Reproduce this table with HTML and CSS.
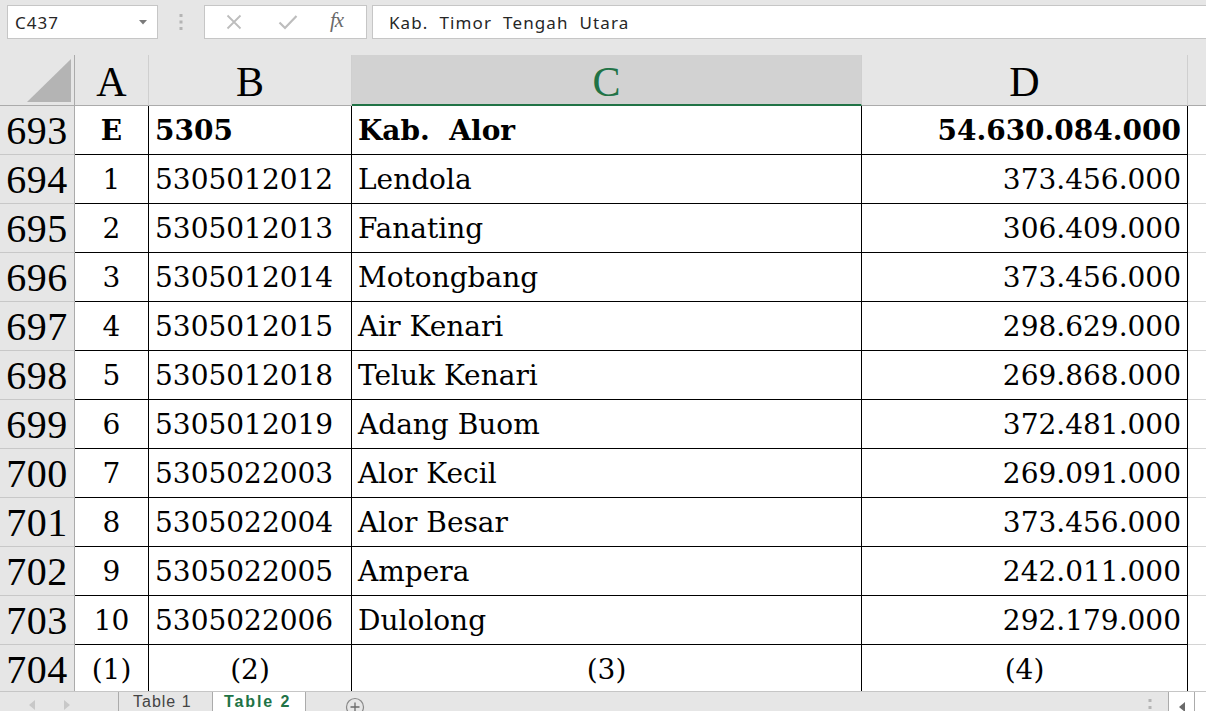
FILE: index.html
```html
<!DOCTYPE html>
<html lang="id">
<head>
<meta charset="utf-8">
<title>Table 2</title>
<link rel="stylesheet" href="styles.css">
</head>
<body>
<div class="app">
  <div class="fbar">
    <div class="namebox">
      <span>C437</span>
      <svg class="dd" width="8" height="5" viewBox="0 0 8 5"><path d="M0 0 L8 0 L4 4.5 Z" fill="#7a7a7a"/></svg>
    </div>
    <div class="grip">
      <svg width="4" height="18" viewBox="0 0 4 18"><rect x="0.5" y="1" width="3" height="3" fill="#b4b4b4"/><rect x="0.5" y="7.5" width="3" height="3" fill="#b4b4b4"/><rect x="0.5" y="14" width="3" height="3" fill="#b4b4b4"/></svg>
    </div>
    <div class="fxbox">
      <svg class="ic-x" width="16" height="16" viewBox="0 0 16 16"><path d="M1.5 1.5 L14.5 14.5 M14.5 1.5 L1.5 14.5" stroke="#bdbdbd" stroke-width="1.8" fill="none"/></svg>
      <svg class="ic-ok" width="20" height="16" viewBox="0 0 20 16"><path d="M1.5 8.5 L7 14 L18.5 2" stroke="#bdbdbd" stroke-width="2.2" fill="none"/></svg>
      <span class="fx">fx</span>
    </div>
    <div class="finput">Kab.  Timor  Tengah  Utara</div>
  </div>

  <div class="sheet">
    <div class="corner"></div>
    <div class="hd">A</div>
    <div class="hd">B</div>
    <div class="hd sel">C</div>
    <div class="hd">D</div>
    <div class="hd hd-e"></div>

    <div class="rh">693</div>
    <div class="c ca b">E</div>
    <div class="c b">5305</div>
    <div class="c b">Kab.  Alor</div>
    <div class="c cr b">54.630.084.000</div>
    <div class="e"></div>

    <div class="rh">694</div>
    <div class="c ca">1</div>
    <div class="c">5305012012</div>
    <div class="c">Lendola</div>
    <div class="c cr">373.456.000</div>
    <div class="e"></div>

    <div class="rh">695</div>
    <div class="c ca">2</div>
    <div class="c">5305012013</div>
    <div class="c">Fanating</div>
    <div class="c cr">306.409.000</div>
    <div class="e"></div>

    <div class="rh">696</div>
    <div class="c ca">3</div>
    <div class="c">5305012014</div>
    <div class="c">Motongbang</div>
    <div class="c cr">373.456.000</div>
    <div class="e"></div>

    <div class="rh">697</div>
    <div class="c ca">4</div>
    <div class="c">5305012015</div>
    <div class="c">Air Kenari</div>
    <div class="c cr">298.629.000</div>
    <div class="e"></div>

    <div class="rh">698</div>
    <div class="c ca">5</div>
    <div class="c">5305012018</div>
    <div class="c">Teluk Kenari</div>
    <div class="c cr">269.868.000</div>
    <div class="e"></div>

    <div class="rh">699</div>
    <div class="c ca">6</div>
    <div class="c">5305012019</div>
    <div class="c">Adang Buom</div>
    <div class="c cr">372.481.000</div>
    <div class="e"></div>

    <div class="rh">700</div>
    <div class="c ca">7</div>
    <div class="c">5305022003</div>
    <div class="c">Alor Kecil</div>
    <div class="c cr">269.091.000</div>
    <div class="e"></div>

    <div class="rh">701</div>
    <div class="c ca">8</div>
    <div class="c">5305022004</div>
    <div class="c">Alor Besar</div>
    <div class="c cr">373.456.000</div>
    <div class="e"></div>

    <div class="rh">702</div>
    <div class="c ca">9</div>
    <div class="c">5305022005</div>
    <div class="c">Ampera</div>
    <div class="c cr">242.011.000</div>
    <div class="e"></div>

    <div class="rh">703</div>
    <div class="c ca">10</div>
    <div class="c">5305022006</div>
    <div class="c">Dulolong</div>
    <div class="c cr">292.179.000</div>
    <div class="e"></div>

    <div class="rh">704</div>
    <div class="c ca">(1)</div>
    <div class="c ca">(2)</div>
    <div class="c ca">(3)</div>
    <div class="c ca">(4)</div>
    <div class="e"></div>
  </div>

  <div class="tabbar">
    <div class="nav">
      <svg width="6" height="10" viewBox="0 0 6 10"><path d="M6 0 L0 5 L6 10 Z" fill="#c8c8c8"/></svg>
      <svg width="6" height="10" viewBox="0 0 6 10"><path d="M0 0 L6 5 L0 10 Z" fill="#c8c8c8"/></svg>
    </div>
    <div class="tab">Table 1</div>
    <div class="tab active">Table 2</div>
    <div class="add">
      <svg width="20" height="20" viewBox="0 0 20 20"><circle cx="10" cy="10" r="8.5" stroke="#8a8a8a" stroke-width="1.2" fill="none"/><path d="M10 5.5 V14.5 M5.5 10 H14.5" stroke="#6a6a6a" stroke-width="1.3"/></svg>
    </div>
    <div class="spacer"></div>
    <div class="tdots">
      <svg width="4" height="14" viewBox="0 0 4 14"><rect x="0.5" y="1" width="3" height="3" fill="#b4b4b4"/><rect x="0.5" y="8" width="3" height="3" fill="#b4b4b4"/></svg>
    </div>
    <div class="sbtn">
      <svg width="6" height="10" viewBox="0 0 6 10"><path d="M6 0 L0 5 L6 10 Z" fill="#6a6a6a"/></svg>
    </div>
    <div class="sbtn last"></div>
  </div>
</div>
</body>
</html>
```

FILE: styles.css
```css
* {
  box-sizing: border-box;
}

html, body {
  margin: 0;
  padding: 0;
}

body {
  width: 1206px;
  height: 711px;
  overflow: hidden;
  background: #e6e6e6;
  font-family: "Noto Sans", "Open Sans", sans-serif;
}

.app {
  display: flex;
  flex-direction: column;
  height: 711px;
}

/* ---------- formula bar ---------- */
.fbar {
  height: 55px;
  flex: none;
  display: flex;
  align-items: flex-start;
  padding: 5px 0 0 7px;
}

.namebox {
  width: 151px;
  height: 34px;
  background: #fff;
  border: 1px solid #c6c6c6;
  display: flex;
  align-items: center;
  justify-content: space-between;
  padding: 0 10px 0 7px;
  font-size: 17px;
  letter-spacing: 1px;
  color: #262626;
}

.grip {
  width: 46px;
  height: 34px;
  display: flex;
  align-items: center;
  justify-content: center;
}

.fxbox {
  width: 163px;
  height: 34px;
  background: #fff;
  border: 1px solid #c6c6c6;
  display: flex;
  align-items: center;
  padding-left: 21px;
}

.ic-x {
  margin-right: 36px;
}

.ic-ok {
  margin-right: 32px;
}

.fx {
  font-family: "Liberation Serif", serif;
  font-style: italic;
  font-size: 21px;
  color: #6a6a6a;
  letter-spacing: -1px;
  line-height: 1;
  margin-top: -3px;
}

.finput {
  flex: 1;
  height: 34px;
  margin-left: 5px;
  background: #fff;
  border: 1px solid #c6c6c6;
  border-right: none;
  display: flex;
  align-items: center;
  padding-left: 16px;
  font-size: 17px;
  letter-spacing: 1.1px;
  color: #262626;
  white-space: pre;
}

/* ---------- sheet grid ---------- */
.sheet {
  height: 636px;
  flex: none;
  overflow: hidden;
  display: grid;
  grid-template-columns: 75px 74px 203px 510px 326px 18px;
  grid-template-rows: 51px;
  grid-auto-rows: 49px;
  background: #fff;
}

.corner {
  background: #e6e6e6;
  border-right: 1px solid #ababab;
  border-bottom: 1px solid #ababab;
  display: flex;
  align-items: flex-end;
  justify-content: flex-end;
  padding: 0 3px 3px 0;
}

.corner::after {
  content: "";
  width: 44px;
  height: 43px;
  background: #b4b4b4;
  clip-path: polygon(100% 0, 100% 100%, 0 100%);
}

.hd {
  background: #e6e6e6;
  border-right: 1px solid #cfcfcf;
  border-bottom: 1px solid #ababab;
  display: flex;
  align-items: center;
  justify-content: center;
  padding-top: 4px;
  font-family: "Liberation Serif", serif;
  font-size: 42px;
  color: #000;
}

.hd.sel {
  background: #d2d2d2;
  color: #217346;
  border-bottom: 2px solid #217346;
}

.hd-e {
  border-right: none;
}

.rh {
  background: #e6e6e6;
  border-right: 1px solid #ababab;
  border-bottom: 1px solid #c8c8c8;
  display: flex;
  align-items: center;
  justify-content: center;
  font-family: "Liberation Serif", serif;
  font-size: 40px;
  letter-spacing: 0.5px;
  color: #000;
}

.c {
  border-right: 1px solid #000;
  border-bottom: 1px solid #000;
  display: flex;
  align-items: center;
  padding: 0 6px 0 6px;
  font-family: "DejaVu Serif", serif;
  font-size: 28px;
  color: #000;
  white-space: pre;
  overflow: hidden;
}

.ca {
  justify-content: center;
  padding: 0;
}

.cr {
  justify-content: flex-end;
}

.b {
  font-weight: bold;
}

.e {
  border-bottom: 1px solid #d4d4d4;
}

/* ---------- sheet tabs ---------- */
.tabbar {
  flex: 1;
  min-height: 0;
  overflow: hidden;
  display: flex;
  align-items: flex-start;
  background: #e6e6e6;
  border-top: 1px solid #c6c6c6;
  font-family: "Liberation Sans", Arial, sans-serif;
  font-size: 16px;
  line-height: 18px;
}

.nav {
  width: 118px;
  height: 19px;
  display: flex;
  align-items: flex-start;
  padding: 8px 0 0 29px;
  gap: 29px;
}

.tab {
  width: 94px;
  height: 19px;
  border-left: 1px solid #ababab;
  padding: 1px 0 0 14px;
  color: #444;
  letter-spacing: 1px;
  white-space: nowrap;
}

.tab.active {
  width: 94px;
  background: #fff;
  border-right: 1px solid #ababab;
  padding: 1px 0 0 11px;
  color: #217346;
  font-weight: bold;
  letter-spacing: 1.9px;
}

.add {
  padding: 5px 0 0 39px;
}

.spacer {
  flex: 1;
}

.tdots {
  width: 20px;
  padding-top: 6px;
}

.sbtn {
  width: 26px;
  height: 19px;
  background: #fff;
  border-left: 1px solid #ababab;
  display: flex;
  justify-content: center;
  padding-top: 10px;
}

.sbtn.last {
  width: 12px;
}
```
